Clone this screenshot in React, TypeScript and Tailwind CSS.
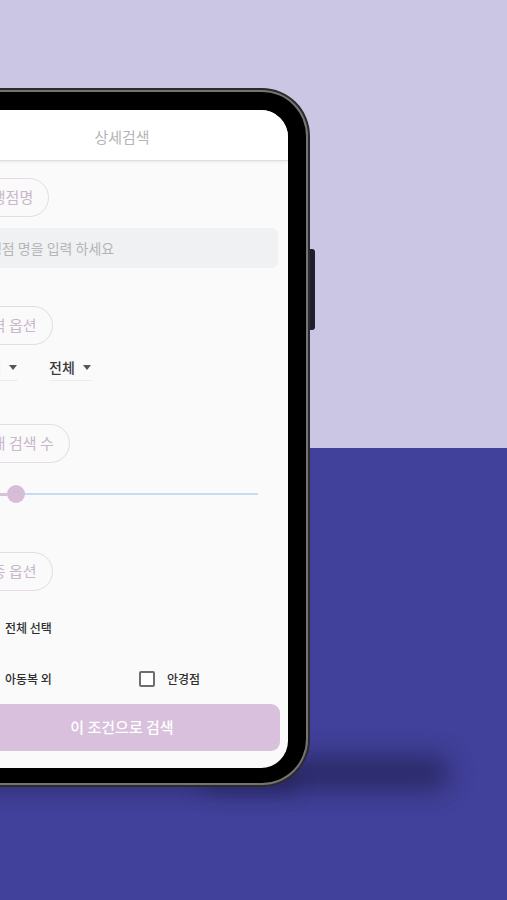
import React from "react";

const font = { fontFamily: '"Noto Sans CJK KR", "Noto Sans", sans-serif' };

function Pill({ children }: { children: React.ReactNode }) {
  return (
    <div className="flex">
      <div className="ml-[6px] inline-flex h-[39px] items-center rounded-full border border-[#e4dae4] px-[15px] text-[15px] text-[#c9b6ca]">
        {children}
      </div>
    </div>
  );
}

function Dropdown() {
  return (
    <div className="flex h-[26px] w-[43px] items-center gap-[8px] border-b border-[#ebebeb]">
      <span className="text-[14px] font-medium text-[#3a3a3a]">전체</span>
      <svg width="8" height="5" viewBox="0 0 8 5">
        <path d="M0 0 L8 0 L4 5 Z" fill="#555" />
      </svg>
    </div>
  );
}

function Check({ label }: { label: string }) {
  return (
    <div className="flex items-center gap-[12px]">
      <div className="h-[16px] w-[16px] rounded-[2px] border-2 border-[#6e6e6e] bg-white" />
      <span className="text-[12px] font-medium text-[#2e2e2e]">{label}</span>
    </div>
  );
}

export default function App() {
  return (
    <div className="relative h-[900px] w-[507px] overflow-hidden" style={font}>
      <div className="h-[448px] bg-[#cac6e3]" />
      <div className="h-[452px] bg-[#41409a]" />

      {/* shadow */}
      <div className="absolute left-[200px] top-[756px] h-[34px] w-[250px] rounded-full bg-[rgba(20,20,55,0.5)] blur-[12px]" />
      <div className="absolute left-[-20px] top-[770px] h-[26px] w-[320px] rounded-full bg-[rgba(20,20,55,0.25)] blur-[8px]" />

      {/* side button */}
      <div className="absolute left-[309px] top-[249px] h-[81px] w-[6px] rounded-r-[3px] bg-[#1e1e2e]" />

      {/* phone */}
      <div className="absolute left-[-66px] top-[88px] h-[699px] w-[376px] rounded-[48px] bg-[#2b2b2b] p-[2px]">
        <div className="h-full w-full rounded-[46px] bg-[#747474] p-[2px]">
          <div className="flex h-full w-full flex-col rounded-[44px] bg-black pb-[15px] pl-[18px] pr-[18px] pt-[18px]">
            <div className="flex flex-1 flex-col overflow-hidden rounded-[27px] bg-[#fafafa]">
              {/* header */}
              <div className="flex h-[51px] shrink-0 items-center justify-center border-b border-[#dedede] bg-white pt-[5px] shadow-[0_1px_3px_rgba(0,0,0,0.08)]">
                <span className="text-[15px] text-[#b5b5b5]">상세검색</span>
              </div>

              <div className="mt-[17px]">
                <Pill>가맹점명</Pill>
              </div>

              <div className="ml-[4px] mr-[10px] mt-[11px] flex h-[40px] items-center rounded-[6px] bg-[#f0f1f3] pl-[16px]">
                <span className="text-[14px] text-[#b5b5b5]">가맹점 명을 입력 하세요</span>
              </div>

              <div className="mt-[38px]">
                <Pill>지역 옵션</Pill>
              </div>

              <div className="ml-[19px] mt-[10px] flex gap-[31px]">
                <Dropdown />
                <Dropdown />
              </div>

              <div className="mt-[43px]">
                <Pill>최대 검색 수</Pill>
              </div>

              <div className="ml-[20px] mr-[30px] mt-[22px] flex h-[18px] items-center">
                <div className="h-[3px] w-[31px] bg-[#d9c2d9]" />
                <div className="h-[18px] w-[18px] shrink-0 rounded-full bg-[#d7bcd7]" />
                <div className="h-[2px] flex-1 bg-[#c6dcf2]" />
              </div>

              <div className="mt-[49px]">
                <Pill>업종 옵션</Pill>
              </div>

              <div className="ml-[21px] mt-[25px] flex h-[24px] items-center">
                <Check label="전체 선택" />
              </div>

              <div className="ml-[21px] mt-[27px] flex h-[24px] items-center">
                <div className="w-[162px]">
                  <Check label="아동복 외" />
                </div>
                <Check label="안경점" />
              </div>

              <div className="mx-[8px] mt-[13px] flex h-[47px] items-center justify-center rounded-[9px] bg-[#d9c0dc]">
                <span className="text-[15px] font-medium text-white">이 조건으로 검색</span>
              </div>
            </div>
          </div>
        </div>
      </div>
    </div>
  );
}
